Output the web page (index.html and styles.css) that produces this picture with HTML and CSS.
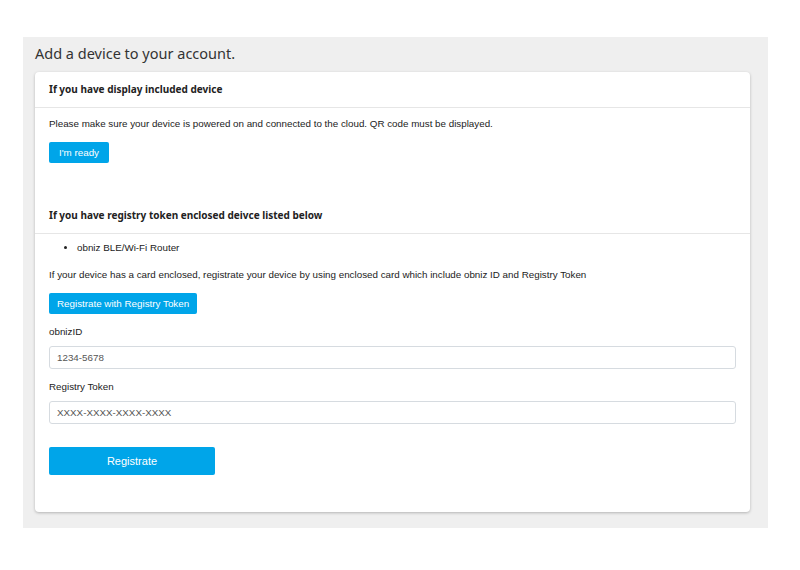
FILE: index.html
```html
<!DOCTYPE html>
<html lang="en">
<head>
    <meta charset="UTF-8">
    <title>Add a device</title>
    <link rel="stylesheet" href="styles.css">
</head>
<body>
    <div class="panel">
        <h2 class="page-title">Add a device to your account.</h2>
        <div class="card">
            <div class="card-header">If you have display included device</div>
            <div class="card-body first">
                <p class="text">Please make sure your device is powered on and connected to the cloud. QR code must be displayed.</p>
                <button class="btn btn-small ready">I'm ready</button>
            </div>
            <div class="card-header">If you have registry token enclosed deivce listed below</div>
            <div class="card-body">
                <ul class="device-list">
                    <li>obniz BLE/Wi-Fi Router</li>
                </ul>
                <p class="text">If your device has a card enclosed, registrate your device by using enclosed card which include obniz ID and Registry Token</p>
                <button class="btn btn-small">Registrate with Registry Token</button>
                <label class="field-label">obnizID</label>
                <input class="field" type="text" value="1234-5678">
                <label class="field-label">Registry Token</label>
                <input class="field" type="text" value="XXXX-XXXX-XXXX-XXXX">
                <button class="btn btn-large">Registrate</button>
            </div>
        </div>
    </div>
</body>
</html>
```

FILE: styles.css
```css
body {
    margin: 0;
    background-color: #fff;
    font-family: 'Liberation Sans', Arial, sans-serif;
    color: #222;
}
.panel {
    margin: 37px 0 0 23px;
    width: 745px;
    height: 491px;
    box-sizing: border-box;
    padding: 0 18px 0 12px;
    background-color: #efefef;
}
.page-title {
    margin: 0;
    padding-top: 6px;
    height: 29px;
    font-family: 'Noto Sans', sans-serif;
    font-weight: 400;
    font-size: 14.5px;
    line-height: 20px;
    color: #333;
}
.card {
    background-color: #fff;
    border-radius: 4px;
    box-shadow: 0 1px 3px rgba(0, 0, 0, 0.25);
    padding-bottom: 37px;
}
.card-header {
    height: 35px;
    line-height: 35px;
    padding-left: 14px;
    border-bottom: 1px solid #e6e6e6;
    font-family: 'Noto Sans', sans-serif;
    font-weight: 700;
    font-size: 10px;
    color: #222;
}
.card-body {
    padding: 6px 14px 0 14px;
    display: flex;
    flex-direction: column;
    align-items: flex-start;
}
.card-body.first {
    padding-top: 8px;
    padding-bottom: 35px;
}
.text {
    margin: 0;
    font-size: 9.8px;
    line-height: 16px;
}
.device-list {
    margin: 0 0 11px 0;
    padding-left: 28px;
    font-size: 9.8px;
    line-height: 16px;
}
.btn {
    border: none;
    border-radius: 2px;
    background-color: #00a5e9;
    color: #fff;
    font-family: 'Liberation Sans', Arial, sans-serif;
    cursor: pointer;
}
.btn-small {
    margin-top: 10px;
    height: 21px;
    padding: 0 8px;
    font-size: 9.8px;
}
.btn-small.ready {
    padding: 0 10px;
}
.field-label {
    margin-top: 10px;
    font-size: 9.8px;
    line-height: 16px;
}
.field {
    margin-top: 6px;
    width: 100%;
    height: 23px;
    box-sizing: border-box;
    border: 1px solid #d6dbe0;
    border-radius: 3px;
    padding: 0 7px;
    font-family: 'Liberation Sans', Arial, sans-serif;
    font-size: 9.8px;
    color: #555;
}
.btn-large {
    margin-top: 23px;
    width: 166px;
    height: 28px;
    font-size: 11px;
}
```
